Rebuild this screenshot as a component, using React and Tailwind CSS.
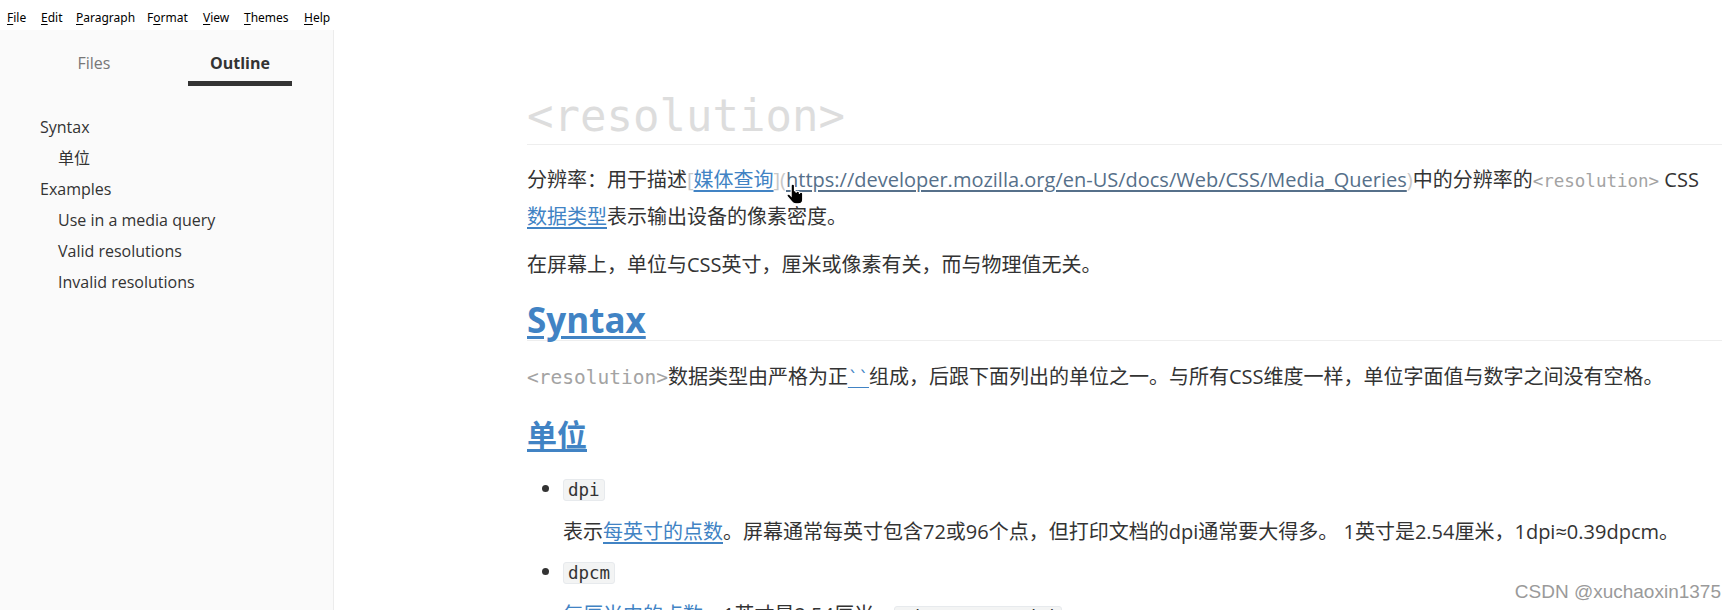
const menuItems = [
  { pre: "", key: "F", post: "ile", w: "w-[34px]" },
  { pre: "", key: "E", post: "dit", w: "w-[35px]" },
  { pre: "", key: "P", post: "aragraph", w: "w-[71px]" },
  { pre: "F", key: "o", post: "rmat", w: "w-[56px]" },
  { pre: "", key: "V", post: "iew", w: "w-[41px]" },
  { pre: "", key: "T", post: "hemes", w: "w-[60px]" },
  { pre: "", key: "H", post: "elp", w: "w-[40px]" },
];

const outline = [
  { text: "Syntax", sub: false },
  { text: "单位", sub: true },
  { text: "Examples", sub: false },
  { text: "Use in a media query", sub: true },
  { text: "Valid resolutions", sub: true },
  { text: "Invalid resolutions", sub: true },
];

function Code({ children }) {
  return (
    <code className="inline-block px-[4px] leading-[20px] text-[17.5px] text-[#333] bg-[#f3f4f4] border border-[#e7eaed] rounded-[3px] font-['DejaVu_Sans_Mono',monospace] align-middle">
      {children}
    </code>
  );
}

function Raw({ children, big }) {
  return (
    <span
      className={
        "text-[#a3a3a3] font-['DejaVu_Sans_Mono',monospace] " +
        (big ? "text-[19.5px]" : "text-[17.5px]")
      }
    >
      {children}
    </span>
  );
}

function Link({ children }) {
  return <span className="text-[#4183c4] underline underline-offset-[3px]">{children}</span>;
}

function Bullet({ children }) {
  return (
    <div className="flex items-center h-[35px]">
      <div className="w-[36px] flex justify-center">
        <span className="w-[7px] h-[7px] rounded-full bg-[#333]" />
      </div>
      <div>{children}</div>
    </div>
  );
}

function HandCursor() {
  return (
    <svg width="18" height="23" viewBox="0 0 16 21" className="absolute left-[786px] top-[183px]">
      <path
        d="M6 1c-.8 0-1.5.7-1.5 1.5V12L3.2 10.6c-.6-.6-1.6-.6-2.1 0-.5.5-.5 1.3 0 1.9L5 17c1 1.3 2.2 2 3.8 2H11c2.2 0 4-1.8 4-4v-5c0-.8-.7-1.5-1.5-1.5S12 9.2 12 10V9c0-.8-.7-1.5-1.5-1.5S9 8.2 9 9v-.5C9 7.7 8.3 7 7.5 7V2.5C7.5 1.7 6.8 1 6 1z"
        fill="#000"
        stroke="#fff"
        strokeWidth="1"
      />
    </svg>
  );
}

export default function App() {
  return (
    <div className="relative w-[1736px] h-[610px] overflow-hidden bg-white flex flex-col font-['Open_Sans','Noto_Sans_CJK_SC',sans-serif]">
      {/* menu bar */}
      <div className="h-[30px] shrink-0 flex pl-[7px] pt-[10px] text-[12px] leading-[16px] text-black font-['Noto_Sans',sans-serif]">
        {menuItems.map((m) => (
          <div key={m.key + m.post} className={m.w}>
            {m.pre}
            <span className="underline underline-offset-[2px]">{m.key}</span>
            {m.post}
          </div>
        ))}
      </div>

      <div className="flex flex-1 min-h-0">
        {/* sidebar */}
        <div className="w-[334px] shrink-0 bg-[#fafafa] border-r border-[#ececec]">
          <div className="flex pl-[21px] pt-[21px]">
            <div className="w-[146px] flex flex-col items-center">
              <div className="text-[16px] leading-[24px] text-[#777]">Files</div>
            </div>
            <div className="w-[146px] flex flex-col items-center">
              <div className="text-[16px] leading-[24px] font-bold text-[#333]">Outline</div>
              <div className="mt-[6px] w-[104px] h-[5px] bg-[#333]" />
            </div>
          </div>
          <div className="mt-[26px] flex flex-col">
            {outline.map((o) => (
              <div
                key={o.text}
                className={
                  "h-[31px] leading-[31px] text-[16px] text-[#333] " +
                  (o.sub ? "pl-[58px]" : "pl-[40px]")
                }
              >
                {o.text}
              </div>
            ))}
          </div>
        </div>

        {/* editor */}
        <div className="flex-1 pl-[193px] pr-[14px] text-[20px] text-[#333]">
          <h1 className="mt-[59px] leading-[53px] pb-[2px] border-b border-[#eeeeee] text-[44px] text-[#dddddd] font-['DejaVu_Sans_Mono',monospace]">
            &lt;resolution&gt;
          </h1>

          <p className="mt-[17px] leading-[35px]">
            <span className="whitespace-nowrap">
              分辨率：用于描述<span className="text-[#c8c8c8]">[</span>
              <Link>媒体查询</Link>
              <span className="text-[#c8c8c8]">](</span>
              <span className="text-[#56708a] underline underline-offset-[3px]">
                https://developer.mozilla.org/en-US/docs/Web/CSS/Media_Queries
              </span>
              <span className="text-[#c8c8c8]">)</span>中的分辨率的<Raw>&lt;resolution&gt;</Raw> CSS
            </span>
            <br />
            <Link>数据类型</Link>表示输出设备的像素密度。
          </p>

          <p className="mt-[13px] leading-[35px]">在屏幕上，单位与CSS英寸，厘米或像素有关，而与物理值无关。</p>

          <h2 className="mt-[18px] leading-[40px] border-b border-[#eeeeee] text-[35px] font-bold">
            <Link>Syntax</Link>
          </h2>

          <p className="mt-[18px] leading-[35px]">
            <Raw big>&lt;resolution&gt;</Raw>数据类型由严格为正
            <span className="text-[#4183c4] underline underline-offset-[3px] font-['DejaVu_Sans_Mono',monospace] text-[17.5px]">``</span>
            组成，后跟下面列出的单位之一。与所有CSS维度一样，单位字面值与数字之间没有空格。
          </p>

          <h3 className="mt-[19px] leading-[40px] text-[30px] font-bold">
            <Link>单位</Link>
          </h3>

          <div className="mt-[16px] flex flex-col">
            <Bullet>
              <Code>dpi</Code>
            </Bullet>
            <p className="mt-[8px] pl-[36px] leading-[35px]">
              表示<Link>每英寸的点数</Link>。屏幕通常每英寸包含72或96个点，但打印文档的dpi通常要大得多。 1英寸是2.54厘米，1dpi≈0.39dpcm。
            </p>
            <div className="mt-[5px]">
              <Bullet>
                <Code>dpcm</Code>
              </Bullet>
            </div>
            <p className="mt-[8px] pl-[36px] leading-[35px]">
              <Link>每厘米内的点数</Link>。1英寸是2.54厘米，<Code>1dpcm ≈ 2.54dpi</Code>
            </p>
          </div>
        </div>
      </div>

      <HandCursor />

      <div className="absolute right-[15px] bottom-[7px] text-[19px] leading-[22px] text-[#9a9a9a] font-['Liberation_Sans',sans-serif]">
        CSDN @xuchaoxin1375
      </div>
    </div>
  );
}
